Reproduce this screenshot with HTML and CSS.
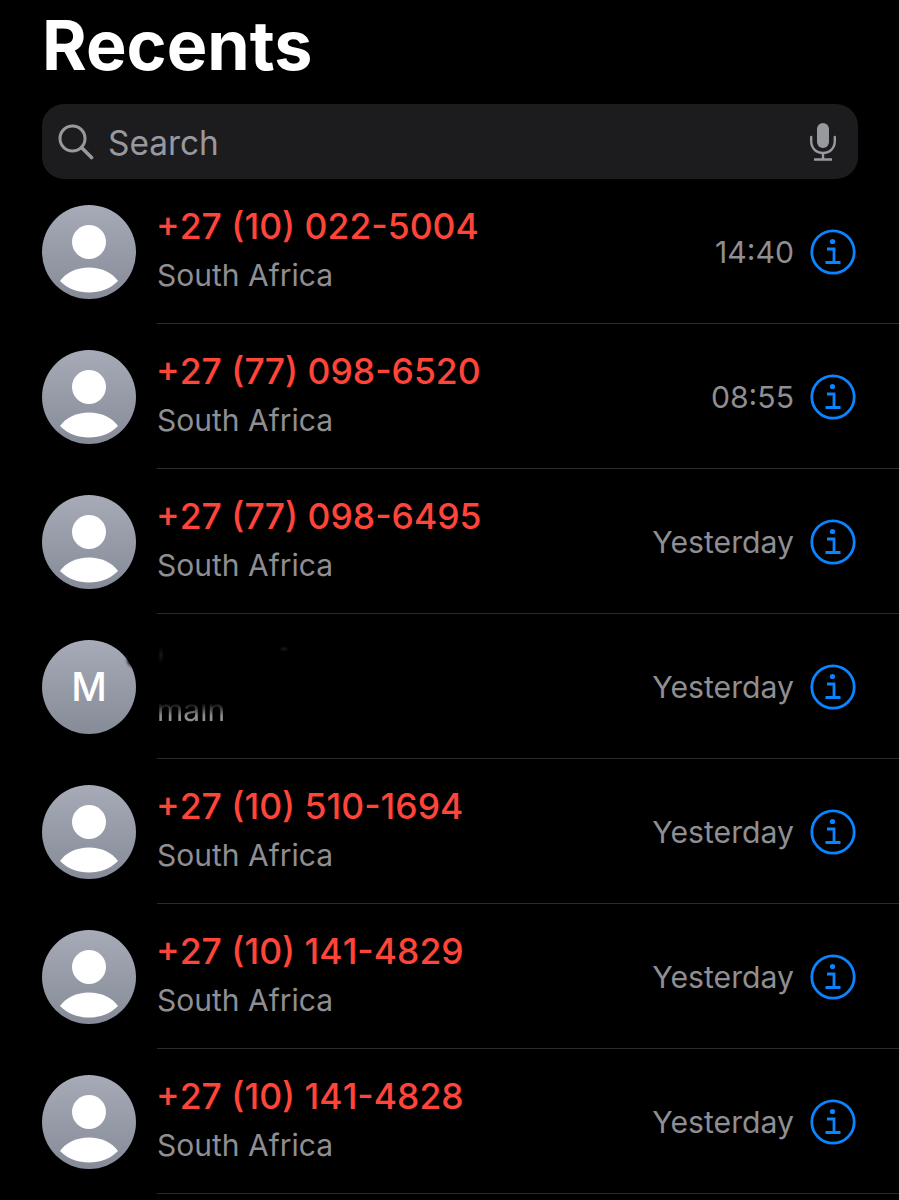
FILE: index.html
```html
<!DOCTYPE html>
<html lang="en">
<head>
<meta charset="utf-8">
<title>Recents</title>
<link rel="stylesheet" href="styles.css">
</head>
<body>
<svg class="defs" width="0" height="0" aria-hidden="true">
  <defs>
    <linearGradient id="avatar-fill" x1="0" y1="0" x2="0" y2="1">
      <stop offset="0" stop-color="#a6abb7"/>
      <stop offset="1" stop-color="#868b98"/>
    </linearGradient>
    <symbol id="person" viewBox="0 0 94 94">
      <circle cx="47" cy="47" r="47" fill="url(#avatar-fill)"/>
      <circle cx="47" cy="37" r="17" fill="#fff"/>
      <path d="M18 76 C24 67.500 35 62.500 47 62.500 C59 62.500 70 67.500 76 76 C68 84 58 87.500 47 87.500 C36 87.500 26 84 18 76 Z" fill="#fff"/>
    </symbol>
    <symbol id="info" viewBox="0 0 46 46">
      <circle cx="23" cy="23" r="21.200" fill="none" stroke="currentColor" stroke-width="2.800"/>
      <circle cx="22.500" cy="12.500" r="2.600" fill="currentColor"/>
      <path d="M17 20 H24 V33.500 M15.500 33.500 H30.500" fill="none" stroke="currentColor" stroke-width="2.800"/>
    </symbol>
  </defs>
</svg>
<main class="screen">
  <h1 class="title">Recents</h1>
  <div class="search">
    <svg class="search-icon" viewBox="0 0 36 36" aria-hidden="true">
      <circle cx="14.500" cy="14.500" r="12.500" fill="none" stroke="currentColor" stroke-width="3"/>
      <path d="M23.500 23.500 L33.500 33.500" fill="none" stroke="currentColor" stroke-width="3.600" stroke-linecap="round"/>
    </svg>
    <span class="search-text">Search</span>
    <svg class="mic-icon" viewBox="0 0 26 38" aria-hidden="true">
      <rect x="7" y="0" width="12" height="25" rx="6" fill="currentColor"/>
      <path d="M1.200 14 V18 C1.200 25 6 30 13 30 C20 30 24.800 25 24.800 18 V14" fill="none" stroke="currentColor" stroke-width="2.400" stroke-linecap="round"/>
      <path d="M13 30 V36 M4 36.500 H22" fill="none" stroke="currentColor" stroke-width="2.400"/>
    </svg>
  </div>
  <ul class="list">
    <li class="row">
      <svg class="avatar"><use href="#person"/></svg>
      <div class="body">
        <div class="text"><div class="name">+27 (10) 022-5004</div><div class="sub">South Africa</div></div>
        <span class="when">14:40</span>
        <svg class="info"><use href="#info"/></svg>
      </div>
    </li>
    <li class="row">
      <svg class="avatar"><use href="#person"/></svg>
      <div class="body">
        <div class="text"><div class="name">+27 (77) 098-6520</div><div class="sub">South Africa</div></div>
        <span class="when">08:55</span>
        <svg class="info"><use href="#info"/></svg>
      </div>
    </li>
    <li class="row">
      <svg class="avatar"><use href="#person"/></svg>
      <div class="body">
        <div class="text"><div class="name">+27 (77) 098-6495</div><div class="sub">South Africa</div></div>
        <span class="when">Yesterday</span>
        <svg class="info"><use href="#info"/></svg>
      </div>
    </li>
    <li class="row">
      <div class="avatar avatar-letter">M<span class="smudge"></span></div>
      <div class="body">
        <div class="text"><div class="name name-hidden">&nbsp;</div><div class="sub sub-faded">main</div></div>
        <span class="when">Yesterday</span>
        <svg class="info"><use href="#info"/></svg>
      </div>
    </li>
    <li class="row">
      <svg class="avatar"><use href="#person"/></svg>
      <div class="body">
        <div class="text"><div class="name">+27 (10) 510-1694</div><div class="sub">South Africa</div></div>
        <span class="when">Yesterday</span>
        <svg class="info"><use href="#info"/></svg>
      </div>
    </li>
    <li class="row">
      <svg class="avatar"><use href="#person"/></svg>
      <div class="body">
        <div class="text"><div class="name">+27 (10) 141-4829</div><div class="sub">South Africa</div></div>
        <span class="when">Yesterday</span>
        <svg class="info"><use href="#info"/></svg>
      </div>
    </li>
    <li class="row">
      <svg class="avatar"><use href="#person"/></svg>
      <div class="body">
        <div class="text"><div class="name">+27 (10) 141-4828</div><div class="sub">South Africa</div></div>
        <span class="when">Yesterday</span>
        <svg class="info"><use href="#info"/></svg>
      </div>
    </li>
  </ul>
</main>
</body>
</html>
```
FILE: styles.css
```css
* { box-sizing: border-box; }
html, body { margin: 0; padding: 0; background: #000; }
body { font-family: Inter, "Liberation Sans", sans-serif; height: 1200px; overflow: hidden; }
.defs { position: absolute; }
.screen { display: flex; flex-direction: column; }
.title { margin: 5px 0 0 42px; height: 99px; font-size: 68.200px; line-height: 80px; font-weight: 700; color: #fff; }
.search { display: flex; align-items: center; margin: 0 41px 0 42px; height: 75px; padding: 0 22px 0 16px; background: #1c1c1e; border-radius: 22px; color: #98989f; }
.search-icon { width: 36px; height: 36px; flex: none; }
.search-text { flex: 1; margin: 2px 0 0 14px; font-size: 33.400px; line-height: 40px; }
.mic-icon { width: 26px; height: 38px; flex: none; }
.list { list-style: none; margin: 0; padding: 0; }
.row { display: flex; align-items: center; height: 145px; padding-left: 42px; }
.avatar { width: 94px; height: 94px; flex: none; margin-right: 21px; }
.avatar-letter { position: relative; display: flex; align-items: center; justify-content: center; border-radius: 50%; background: linear-gradient(#a6abb7, #868b98); color: #fff; font-size: 39px; font-weight: 500; }
.smudge { position: absolute; top: 17px; right: 2px; width: 6px; height: 10px; background: #000; border-radius: 50%; filter: blur(1.5px); transform: rotate(-35deg); }
.body { flex: 1; display: flex; align-items: center; height: 100%; padding: 2px 43px 0 0; border-bottom: 1px solid #2a2a2c; }
.text { flex: 1; margin-top: -4px; }
.name { margin-left: -1px; font-size: 35.500px; line-height: 50px; font-weight: 500; color: #ff453a; font-kerning: none; }
.name-hidden { color: transparent; background: radial-gradient(ellipse 3px 8px at 5px 18px, #1a1a1a, transparent), radial-gradient(ellipse 5px 3px at 128px 12px, #1a1a1a, transparent); }
.sub { margin-top: -1px; font-size: 30px; line-height: 48px; color: #8e8e93; }
.sub-faded { -webkit-mask-image: linear-gradient(transparent 35%, #000 62%); mask-image: linear-gradient(transparent 35%, #000 62%); }
.when { font-size: 30.200px; line-height: 40px; color: #8e8e93; margin-right: 16px; }
.info { width: 46px; height: 46px; flex: none; color: #0a84ff; }
```
